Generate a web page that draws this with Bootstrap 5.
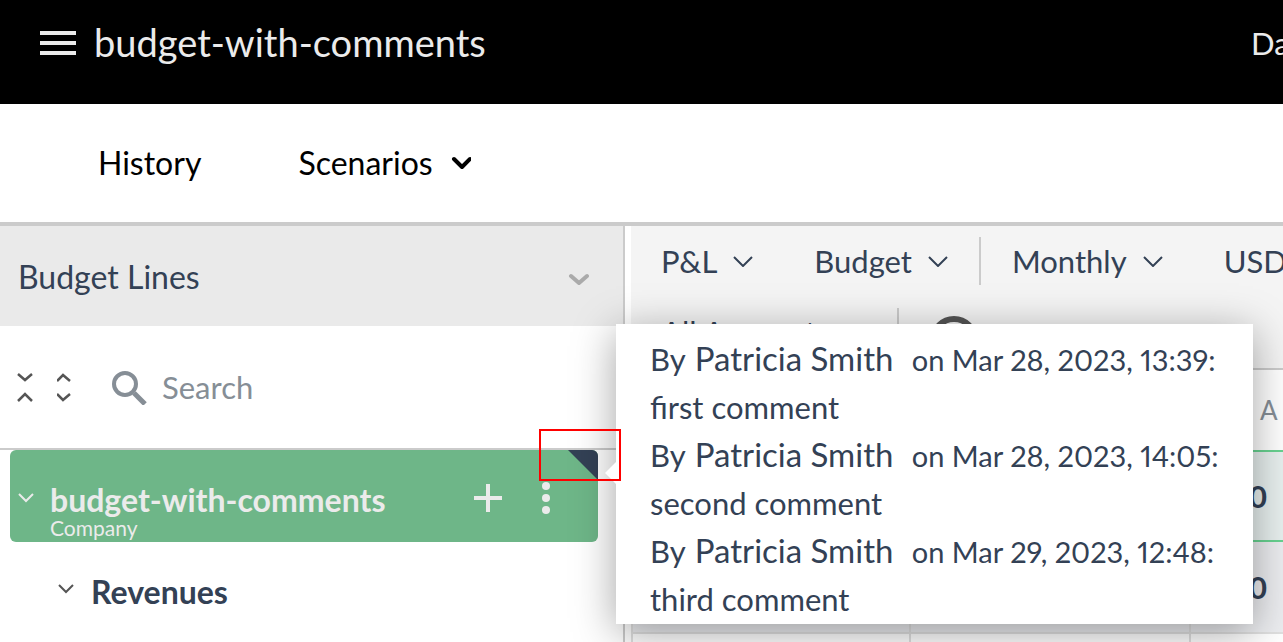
<!DOCTYPE html>
<html lang="en">
<head>
<meta charset="utf-8">
<meta name="viewport" content="width=device-width, initial-scale=1">
<title>budget-with-comments</title>
<link href="https://cdn.jsdelivr.net/npm/bootstrap@5.3.0/dist/css/bootstrap.min.css" rel="stylesheet">
<style>
  :root { --ink: #334155; --line: #cbcbcb; --soft: #ebebeb; --brand: #6eb688; }
  body { font-family: Lato, "Open Sans", sans-serif; font-size: 31px; line-height: 48px; color: var(--ink); background: #fff; overflow: hidden; }
  svg { display: block; flex: none; }
  button, a { color: inherit; }
  .plain { background: none; border: 0; padding: 0; display: flex; align-items: center; white-space: nowrap; text-decoration: none; }
  .topbar { background: #000; color: var(--soft); height: 104px; padding: 0 0 18px 40px; }
  .topbar h1 { font-size: 38px; line-height: 48px; font-weight: 400; margin: 0 0 2px 18px; }
  .date-link { width: 32px; overflow: hidden; }
  .tabs { height: 122px; padding: 0 98px; gap: 97px; color: #000; font-size: 32px; border-bottom: 4px solid var(--line); }
  .workspace { height: calc(100vh - 226px); }
  .lines-pane { flex: 0 0 625px; border-right: 2px solid var(--line); }
  .pane-head { height: 100px; background: #eaeaea; padding: 2px 34px 0 18px; }
  .pane-head h2 { font-size: 32px; line-height: 48px; font-weight: 400; }
  .search-row { height: 124px; padding-left: 17px; border-bottom: 2px solid var(--line); }
  .search-row label { gap: 14px; margin-left: 39px; }
  .search-row input { border: 0; outline: 0; background: none; color: var(--ink); width: 300px; padding: 0; }
  .search-row input::placeholder { color: #868e96; opacity: 1; }
  .company-row { height: 92px; margin: 0 25px 0 10px; border-radius: 6px; background: var(--brand); color: var(--soft); padding: 0 48px 0 8px; }
  .company-name { font-weight: 700; font-size: 32px; line-height: 36px; }
  .company-kind { font-size: 21px; line-height: 20px; }
  .note-corner { top: 0; right: 0; width: 30px; height: 30px; background: #334155; border-top-right-radius: 6px; clip-path: polygon(0 0, 100% 0, 100% 100%); }
  .marker { top: -21px; right: -23px; width: 82px; height: 52px; border: 2px solid #f00; z-index: 12; }
  .comments { top: -126px; left: calc(100% + 18px); width: 637px; padding: 11px 0 1px 34px; background: #fff; color: var(--ink); z-index: 11; box-shadow: 0 8px 40px rgba(0,0,0,.36); }
  .comments::before { content: ""; position: absolute; left: -11px; top: 138px; border: 11px solid transparent; border-left: 0; border-right-color: #fff; }
  .comments > div { height: 48px; }
  .author { display: inline-block; width: 217px; margin-left: 2px; font-size: 33px; line-height: 46px; }
  .comments time { font-size: 29px; font-variant-numeric: proportional-nums; }
  .group-row { padding: 26px 0 0 57px; font-weight: 700; font-size: 32px; }
  .group-row svg { margin-bottom: 4px; }
  .sheet { margin-left: 6px; min-width: 0; overflow: hidden; }
  .tools { height: 144px; background: #f4f4f4; border-bottom: 2px solid var(--line); padding: 11px 0 0 30px; }
  .tools .line-two { height: 48px; margin-top: 23px; }
  .split { width: 2px; height: 48px; background: var(--line); margin: 0 31px; flex: none; }
  .gap-drop { gap: 16px; }
  .tool-gap { margin-left: 61px; }
  .figures { width: 840px; table-layout: fixed; border-collapse: separate; border-spacing: 0; margin: 0; }
  .figures th, .figures td { padding: 0 0 0 58px; border-right: 2px solid #e0e0e0; border-bottom: 2px solid #e0e0e0; }
  .figures tr > :first-child { border-left: 2px solid #e0e0e0; }
  .figures th { height: 82px; padding-left: 69px; font-weight: 400; font-size: 26px; color: #868e96; border-color: transparent; border-bottom-color: #68d391; }
  .figures td { height: 92px; font-weight: 700; background: #ecedf0; }
  .figures .total td { height: 90px; background: #e8f0ef; border-bottom-color: #68d391; }
  .figures .blank td { background: #fff; height: 60px; }
</style>
</head>
<body>
<header class="topbar d-flex align-items-center">
  <button class="plain" aria-label="Menu"><svg width="36" height="26" fill="#ebebeb"><path d="M0 1h36v4H0zM0 11h36v4H0zM0 21h36v4H0z"/></svg></button>
  <h1>budget-with-comments</h1>
  <a class="plain date-link ms-auto" href="#">Date</a>
</header>

<nav class="tabs d-flex align-items-center">
  <a class="plain" href="#">History</a>
  <button class="plain gap-3">Scenarios
    <svg width="22" height="14" fill="none" stroke="#000" stroke-width="4" stroke-linecap="round" stroke-linejoin="round"><path d="M5 3l8 8 8-8"/></svg>
  </button>
</nav>

<main class="workspace d-flex">
  <aside class="lines-pane">
    <div class="pane-head d-flex align-items-center justify-content-between">
      <h2 class="m-0">Budget Lines</h2>
      <button class="plain pt-1" aria-label="Collapse panel"><svg width="22" height="14" fill="none" stroke="#aaa" stroke-width="4" stroke-linecap="round" stroke-linejoin="round"><path d="M4 4l8 7 8-7"/></svg></button>
    </div>
    <div class="search-row d-flex align-items-center">
      <button class="plain" aria-label="Collapse all"><svg width="16" height="32" fill="none" stroke="#555" stroke-width="2.5"><path d="M1 3l7 6 7-6M1 30l7-7 7 7"/></svg></button>
      <button class="plain ms-4" aria-label="Expand all"><svg width="16" height="32" fill="none" stroke="#555" stroke-width="2.5"><path d="M0 10l6-6 7 6M0 23l6 6 7-6"/></svg></button>
      <label class="d-flex align-items-center">
        <svg width="36" height="36" fill="none" stroke="#868e96"><circle cx="13" cy="15" r="11" stroke-width="4"/><path d="M22 24l11 11" stroke-width="5"/></svg>
        <input type="text" placeholder="Search" aria-label="Search">
      </label>
    </div>

    <div class="company-row position-relative d-flex align-items-center">
      <button class="plain pt-1" aria-label="Toggle company"><svg width="16" height="12" fill="none" stroke="#ebebeb" stroke-width="2"><path d="M1 2l7 7 7-7"/></svg></button>
      <div class="ms-3 pt-4 mt-1">
        <div class="company-name">budget-with-comments</div>
        <div class="company-kind">Company</div>
      </div>
      <button class="plain ms-auto pt-1" aria-label="Add line"><svg width="28" height="28" fill="#ebebeb"><path d="M12 0h4v12h12v4H16v12h-4V16H0v-4h12z"/></svg></button>
      <button class="plain ms-4 mt-1 ps-3" aria-label="More"><svg width="8" height="34" fill="#ebebeb"><circle cx="4" cy="5" r="4"/><circle cx="4" cy="17" r="4"/><circle cx="4" cy="29" r="4"/></svg></button>
      <span class="note-corner position-absolute"></span>
      <span class="marker position-absolute"></span>
      <div class="comments position-absolute text-nowrap" role="tooltip">
        <div>By <span class="author">Patricia Smith</span><time>on Mar 28, 2023, 13:39:</time></div>
        <div>first comment</div>
        <div>By <span class="author">Patricia Smith</span><time>on Mar 28, 2023, 14:05:</time></div>
        <div>second comment</div>
        <div>By <span class="author">Patricia Smith</span><time>on Mar 29, 2023, 12:48:</time></div>
        <div>third comment</div>
      </div>
    </div>

    <div class="group-row d-flex align-items-center">
      <button class="plain" aria-label="Toggle revenues"><svg width="18" height="12" fill="none" stroke="#555" stroke-width="2"><path d="M2 1l7 7 7-7"/></svg></button>
      <span class="ms-3">Revenues</span>
    </div>
  </aside>

  <section class="sheet flex-grow-1">
    <div class="tools">
      <div class="d-flex align-items-center">
        <button class="plain gap-drop">P&amp;L <svg width="20" height="12" fill="none" stroke="#334155" stroke-width="2"><path d="M1 2l9 9 9-9"/></svg></button>
        <button class="plain gap-drop tool-gap">Budget <svg width="20" height="12" fill="none" stroke="#334155" stroke-width="2"><path d="M1 2l9 9 9-9"/></svg></button>
        <span class="split"></span>
        <button class="plain gap-drop">Monthly <svg width="20" height="12" fill="none" stroke="#334155" stroke-width="2"><path d="M1 2l9 9 9-9"/></svg></button>
        <button class="plain gap-drop tool-gap">USD</button>
      </div>
      <div class="line-two d-flex align-items-start">
        <button class="plain gap-drop">All Accounts <svg width="20" height="12" fill="none" stroke="#334155" stroke-width="2"><path d="M1 2l9 9 9-9"/></svg></button>
        <span class="split"></span>
        <button class="plain pt-2" aria-label="History"><svg width="48" height="48" fill="none" stroke="#555" stroke-width="6"><circle cx="24" cy="24" r="21"/></svg></button>
      </div>
    </div>
    <table class="figures">
      <thead><tr><th></th><th></th><th>A</th></tr></thead>
      <tbody>
        <tr class="total"><td></td><td></td><td>0</td></tr>
        <tr><td></td><td></td><td>0</td></tr>
        <tr class="blank"><td></td><td></td><td></td></tr>
      </tbody>
    </table>
  </section>
</main>
<script src="https://cdn.jsdelivr.net/npm/bootstrap@5.3.0/dist/js/bootstrap.bundle.min.js"></script>
</body>
</html>
